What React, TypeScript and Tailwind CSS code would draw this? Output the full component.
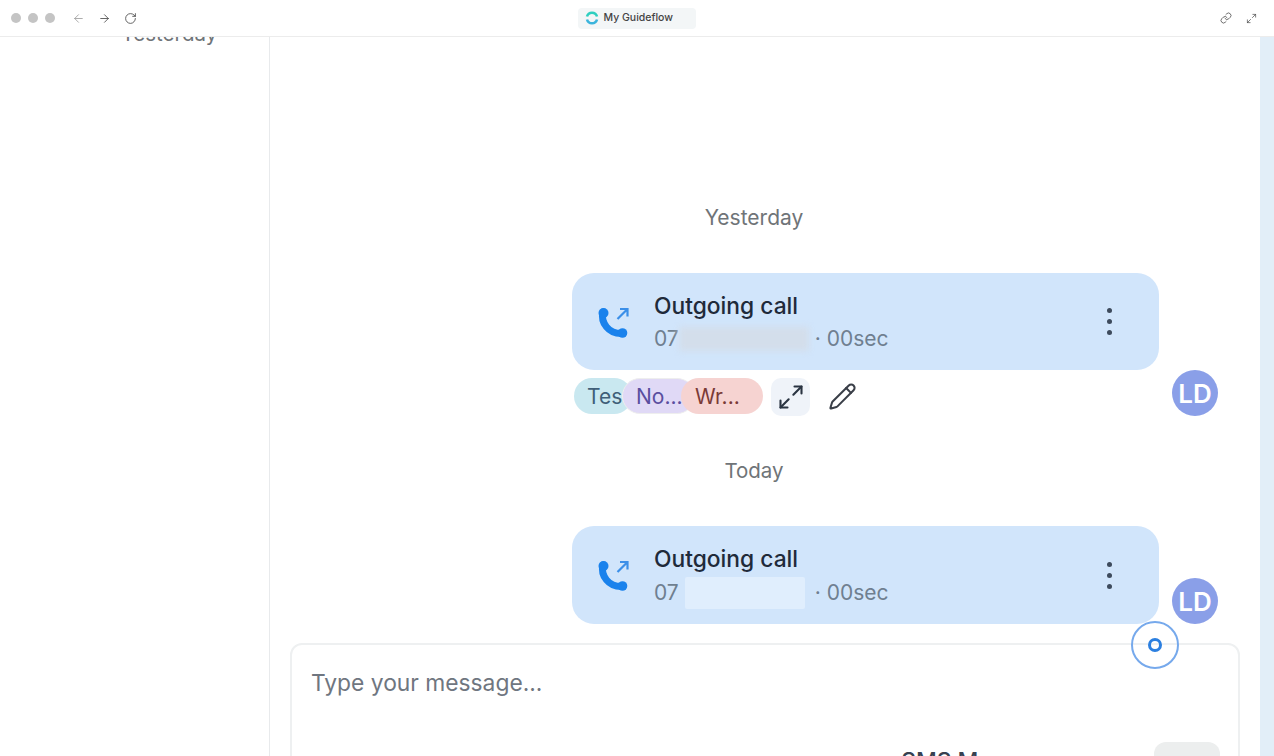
import { ArrowLeft, ArrowRight, Link, Maximize2, Pencil, RotateCw } from "lucide-react";

function CallIcon() {
  return (
    <svg width="32" height="32" viewBox="0 0 32 32" className="shrink-0">
      <path d="M6 6 C3.5 16 11 28.5 26 27.5" fill="none" stroke="#1a82ec" strokeWidth="7" strokeLinecap="round" />
      <circle cx="6.5" cy="7" r="5" fill="#1a82ec" />
      <circle cx="25.5" cy="27" r="4.8" fill="#1a82ec" />
      <path d="M20.5 13 L30 3.5 M23 3 H30.5 V10.5" fill="none" stroke="#3b8fe8" strokeWidth="2.2" />
    </svg>
  );
}

function Dots() {
  return (
    <div className="flex flex-col gap-[6px]">
      <span className="w-[5px] h-[5px] rounded-full bg-[#3d4a5c]" />
      <span className="w-[5px] h-[5px] rounded-full bg-[#3d4a5c]" />
      <span className="w-[5px] h-[5px] rounded-full bg-[#3d4a5c]" />
    </div>
  );
}

function CallCard({ masked }: { masked: "blur" | "solid" }) {
  return (
    <div className={`${masked === "blur" ? "h-[97px]" : "h-[98px]"} rounded-[22px] bg-[#d1e5fb] flex items-center pl-[25px] pr-[47px]`}>
      <CallIcon />
      <div className={`${masked === "blur" ? "pt-[2px]" : "pt-[3px]"} ml-[25px] flex-1`}>
        <div className="text-[22.8px] leading-[30px] font-medium text-[#1f2a3a]">Outgoing call</div>
        <div className="flex items-center text-[21px] leading-[30px] mt-[3px] text-[#6f7f90]">
          <span>07</span>
          {masked === "blur" ? (
            <span className="w-[130px] h-[24px] bg-[#d3deeb] blur-[3px]" />
          ) : (
            <span className="ml-[6px] mr-[1px] w-[120px] h-[32px] rounded-[2px] bg-[#e0eefd]" />
          )}
          <span className={masked === "blur" ? "ml-[6px]" : "ml-[9px]"}>· 00sec</span>
        </div>
      </div>
      <Dots />
    </div>
  );
}

function Avatar() {
  return (
    <div className="w-[46px] h-[46px] rounded-full bg-[#8a9fe8] flex items-center justify-center text-white text-[26px] font-semibold shrink-0">
      LD
    </div>
  );
}

export default function App() {
  return (
    <div className="h-[756px] w-[1274px] overflow-hidden flex flex-col bg-white font-['Inter',sans-serif]">
      <header className="h-[37px] shrink-0 border-b border-[#ececec] flex items-center pl-[11px] pr-[17px] relative">
        <div className="flex gap-[7px]">
          <span className="w-[10px] h-[10px] rounded-full bg-[#c4c4c4]" />
          <span className="w-[10px] h-[10px] rounded-full bg-[#c4c4c4]" />
          <span className="w-[10px] h-[10px] rounded-full bg-[#c4c4c4]" />
        </div>
        <ArrowLeft size={13} strokeWidth={1.5} className="ml-[17px] text-[#9a9a9a]" />
        <ArrowRight size={13} strokeWidth={1.5} className="ml-[13px] text-[#444]" />
        <RotateCw size={13} strokeWidth={1.5} className="ml-[13px] text-[#444]" />
        <div className="flex-1 flex justify-center">
          <div className="ml-[-84px] w-[118px] h-[21px] rounded-[4px] bg-[#f3f6f7] flex items-center pl-[7px] gap-[5px] text-[10.5px] font-medium text-[#444]">
            <svg width="14" height="14" viewBox="0 0 14 14">
              <path d="M2 5.5 A5.2 5.2 0 0 1 12 5.5" fill="none" stroke="#2ecfc0" strokeWidth="2.6" />
              <path d="M12 8.5 A5.2 5.2 0 0 1 2 8.5" fill="none" stroke="#3bb4dc" strokeWidth="2.6" />
            </svg>
            My Guideflow
          </div>
        </div>
        <Link size={12} strokeWidth={1.5} className="text-[#444]" />
        <Maximize2 size={11} strokeWidth={1.5} className="ml-[14px] text-[#444]" />
      </header>

      <div className="flex-1 flex min-h-0">
        <aside className="w-[270px] shrink-0 border-r border-[#e8eaec] pl-[121px] overflow-hidden">
          <div className="-mt-[15px] text-[20.5px] leading-[24px] text-[#6f7478]">Yesterday</div>
        </aside>

        <main className="flex-1 min-w-0 flex flex-col">
          <div className="pt-[169px] pr-[22px] text-center text-[21px] leading-[24px] text-[#6f7478]">Yesterday</div>

          <div className="mt-[43px] flex justify-end items-end gap-[13px] pr-[42px]">
            <div className="w-[587px]">
              <CallCard masked="blur" />
              <div className="mt-[8px] flex items-start text-[21px]">
                <span className="ml-[2px] w-[58px] h-[36px] rounded-full bg-[#c9e8f0] pl-[13px] leading-[38px] text-[#3f5f78] overflow-hidden">Tes</span>
                <span className="-ml-[10px] w-[73px] h-[36px] rounded-full bg-[#e0d9f6] border border-[#eee] pl-[13px] leading-[36px] text-[#5a4ea0]">No...</span>
                <span className="-ml-[14px] w-[82px] h-[36px] rounded-full bg-[#f6d3d1] pl-[14px] leading-[38px] text-[#7a3a36]">Wr...</span>
                <span className="ml-[8px] w-[39px] h-[38px] rounded-[10px] bg-[#eff3f9] flex items-center justify-center">
                  <Maximize2 size={28} strokeWidth={1.8} className="text-[#2a3442]" />
                </span>
                <Pencil size={29} strokeWidth={1.7} className="ml-[18px] mt-[4px] text-[#3a3f48]" />
              </div>
            </div>
            <Avatar />
          </div>

          <div className="mt-[43px] pr-[22px] text-center text-[20.5px] leading-[24px] text-[#6f7478]">Today</div>

          <div className="mt-[43px] flex justify-end items-end gap-[13px] pr-[42px]">
            <div className="w-[587px]">
              <CallCard masked="solid" />
            </div>
            <Avatar />
          </div>

          <div className="mt-[19px] mx-[20px] h-[200px] shrink-0 rounded-t-[12px] border-2 border-[#eef0f1] pl-[19px] pr-[18px] pt-[23px]">
            <div className="text-[22.8px] leading-[30px] text-[#6f7680]">Type your message...</div>
            <div className="mt-[44px] flex justify-end items-start">
              <span className="mt-[7px] mr-[85px] text-[22.8px] leading-[24px] font-medium text-[#374151]">SMS Messages</span>
              <span className="w-[66px] h-[40px] rounded-[12px] bg-[#eceeee]" />
            </div>
          </div>
        </main>

        <div className="w-[14px] shrink-0 bg-[#e2eef8]" />
      </div>

      <div className="absolute left-[1131px] top-[621px] w-[48px] h-[48px] rounded-full border-2 border-[#76a9ec] flex items-center justify-center">
        <span className="w-[14px] h-[14px] rounded-full border-[3px] border-[#2b7fe0]" />
      </div>
    </div>
  );
}
